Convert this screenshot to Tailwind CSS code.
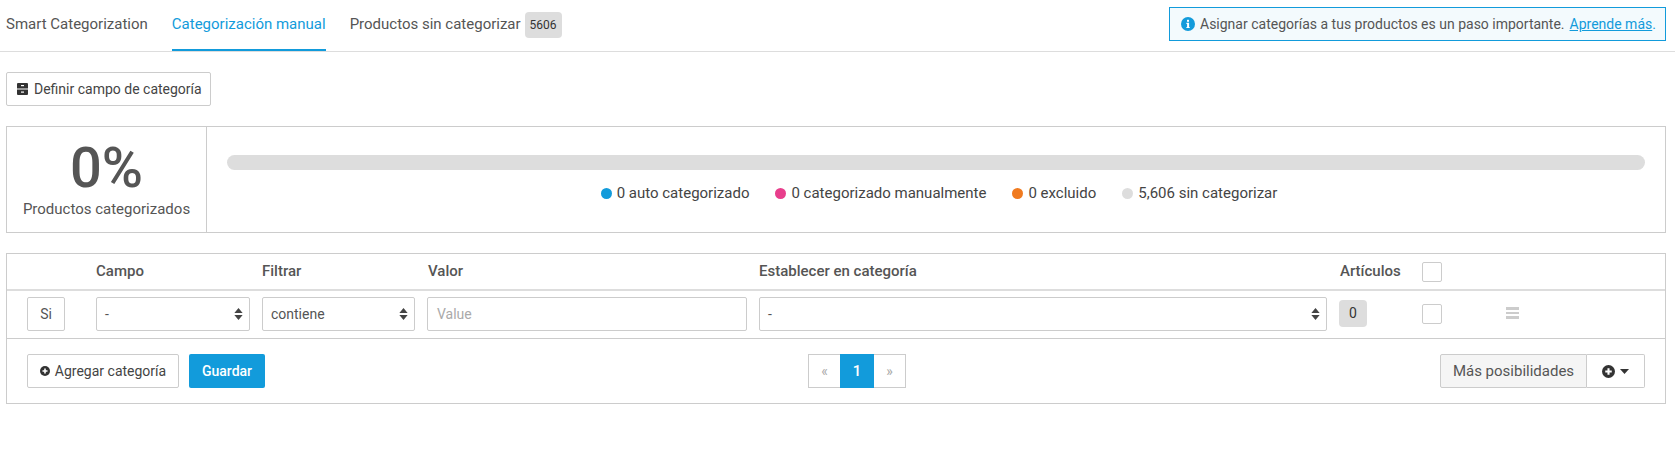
<!DOCTYPE html>
<html lang="es">
  <head>
    <meta charset="UTF-8" />
    <script src="https://cdn.jsdelivr.net/npm/@tailwindcss/browser@4"></script>
    <title>Categorización manual</title>
  </head>
  <body class="bg-white text-[#555] font-['Roboto',sans-serif] text-[15px]">
    <!-- tabs -->
    <div class="flex items-start h-[52px] border-b border-[#ddd] pl-[6px] pr-[9px]">
      <a class="h-[51px] flex items-center mr-[24px] border-b-2 border-transparent">Smart Categorization</a>
      <a class="h-[51px] flex items-center mr-[24px] border-b-2 border-[#129bdb] text-[#129bdb]">Categorización manual</a>
      <a class="h-[51px] flex items-center border-b-2 border-transparent">
        Productos sin categorizar
        <span class="ml-[4px] h-[26px] w-[37px] justify-center rounded-[4px] bg-[#ddd] text-[#333] text-[12px] flex items-center">5606</span>
      </a>
      <div class="ml-auto mt-[7px] h-[34px] w-[497px] border border-[#129bdb] bg-[#f3fafd] flex items-center pl-[11px] whitespace-nowrap text-[14px]">
        <svg class="w-[14px] h-[14px] mr-[5px] shrink-0" viewBox="0 0 14 14">
          <circle cx="7" cy="7" r="7" fill="#129bdb" />
          <rect x="6" y="2.8" width="2" height="2" fill="#fff" />
          <path d="M5.4 5.8h2.7v4.1h.6v1.2H5.4V9.9h.7V7h-.7z" fill="#fff" />
        </svg>
        <span>Asignar categorías a tus productos es un paso importante.</span>
        <a class="ml-[5px] text-[#129bdb] underline">Aprende más</a><span class="text-[#129bdb]">.</span>
      </div>
    </div>

    <div class="pl-[6px] pr-[9px]">
      <div class="pt-[20px]">
        <button class="h-[34px] w-[205px] border border-[#ccc] rounded-[2px] flex items-center pl-[10px] text-[#444] text-[14px]">
          <svg class="w-[11px] h-[12px] mr-[6px]" viewBox="0 0 11 12">
            <path d="M1 0h9a1 1 0 0 1 1 1v4.5H0V1a1 1 0 0 1 1-1zM0 6.5h11V11a1 1 0 0 1-1 1H1a1 1 0 0 1-1-1z" fill="#333" />
            <rect x="4" y="2" width="3" height="1.2" fill="#fff" />
            <rect x="4" y="8.5" width="3" height="1.2" fill="#fff" />
          </svg>
          Definir campo de categoría
        </button>
      </div>

      <!-- progress summary -->
      <div class="mt-[20px] h-[107px] border border-[#ccc] flex">
        <div class="w-[200px] shrink-0 border-r border-[#ccc] flex flex-col items-center">
          <div class="text-[56px] leading-[56px] mt-[13px] text-[#555] font-medium">0%</div>
          <div class="mt-[3px] leading-[20px]">Productos categorizados</div>
        </div>
        <div class="flex-1 px-[20px] pt-[28px]">
          <div class="h-[15px] rounded-full bg-[#ddd]"></div>
          <div class="mt-[12px] flex justify-center gap-[26px] text-[#444] leading-[22px] pl-[6px]">
            <span class="flex items-center gap-[5px]"><i class="w-[11px] h-[11px] rounded-full bg-[#129bdb]"></i>0 auto categorizado</span>
            <span class="flex items-center gap-[5px]"><i class="w-[11px] h-[11px] rounded-full bg-[#e83e8c]"></i>0 categorizado manualmente</span>
            <span class="flex items-center gap-[5px]"><i class="w-[11px] h-[11px] rounded-full bg-[#f07a1f]"></i>0 excluido</span>
            <span class="flex items-center gap-[5px]"><i class="w-[11px] h-[11px] rounded-full bg-[#ddd]"></i>5,606 sin categorizar</span>
          </div>
        </div>
      </div>

      <!-- rules table -->
      <div class="mt-[20px] h-[151px] border border-[#ccc]">
        <div class="h-[37px] border-b-2 border-[#ddd] flex items-center font-medium pl-[89px]">
          <div class="w-[166px]">Campo</div>
          <div class="w-[166px]">Filtrar</div>
          <div class="w-[331px]">Valor</div>
          <div class="w-[581px]">Establecer en categoría</div>
          <div class="w-[82px]">Artículos</div>
          <div class="w-[20px] h-[20px] border border-[#ccc] rounded-[2px]"></div>
        </div>
        <div class="h-[48px] border-b border-[#ccc] flex items-center pl-[20px] pb-px text-[14px]">
          <div class="w-[38px] h-[34px] border border-[#ccc] rounded-[2px] flex items-center justify-center mr-[31px]">Si</div>
          <div class="w-[154px] h-[34px] border border-[#ccc] rounded-[2px] flex items-center justify-between pl-[8px] pr-[6px] mr-[12px]">
            -
            <svg class="w-[9px] h-[12px]" viewBox="0 0 9 13"><path d="M4.5 0L9 5.5H0zM4.5 13L0 7.5h9z" fill="#444" /></svg>
          </div>
          <div class="w-[153px] h-[34px] border border-[#ccc] rounded-[2px] flex items-center justify-between pl-[8px] pr-[6px] mr-[12px]">
            contiene
            <svg class="w-[9px] h-[12px]" viewBox="0 0 9 13"><path d="M4.5 0L9 5.5H0zM4.5 13L0 7.5h9z" fill="#444" /></svg>
          </div>
          <div class="w-[320px] h-[34px] border border-[#ccc] rounded-[2px] flex items-center px-[9px] mr-[12px] text-[#aaa]">Value</div>
          <div class="w-[568px] h-[34px] border border-[#ccc] rounded-[2px] flex items-center justify-between pl-[8px] pr-[6px] mr-[12px]">
            -
            <svg class="w-[9px] h-[12px]" viewBox="0 0 9 13"><path d="M4.5 0L9 5.5H0zM4.5 13L0 7.5h9z" fill="#444" /></svg>
          </div>
          <div class="w-[83px]">
            <div class="w-[28px] h-[27px] -mt-[2px] rounded-[4px] bg-[#ddd] text-[#333] flex items-center justify-center">0</div>
          </div>
          <div class="w-[20px] h-[20px] border border-[#ccc] rounded-[2px] mr-[64px]"></div>
          <div class="w-[13px] flex flex-col gap-[2px] -mt-[2px]">
            <i class="h-[2.5px] bg-[#ccc]"></i><i class="h-[2.5px] bg-[#ccc]"></i><i class="h-[2.5px] bg-[#ccc]"></i>
          </div>
        </div>
        <div class="flex items-center h-[64px] pl-[20px] pr-[20px]">
          <button class="h-[34px] w-[152px] border border-[#ccc] rounded-[2px] flex items-center justify-center gap-[5px] text-[#444] text-[14px]">
            <svg class="w-[10px] h-[10px]" viewBox="0 0 10 10"><circle cx="5" cy="5" r="5" fill="#333" /><path d="M2.5 4.2h1.7V2.5h1.6v1.7h1.7v1.6H5.8v1.7H4.2V5.8H2.5z" fill="#fff" /></svg>
            Agregar categoría
          </button>
          <button class="ml-[10px] h-[34px] w-[76px] bg-[#129bdb] text-white font-medium rounded-[2px] text-[14px]">Guardar</button>
          <div class="flex h-[34px] ml-[543px] border border-[#ccc] text-[#aaa] text-[14px]">
            <span class="w-[31px] flex items-center justify-center">«</span>
            <span class="w-[34px] -my-px flex items-center justify-center bg-[#129bdb] text-white text-[15px] font-medium">1</span>
            <span class="w-[31px] flex items-center justify-center">»</span>
          </div>
          <div class="ml-auto flex h-[34px]">
            <span class="w-[147px] border border-[#ccc] bg-[#f5f5f5] flex items-center justify-center rounded-l-[2px]">Más posibilidades</span>
            <span class="w-[58px] border border-l-0 border-[#ccc] flex items-center justify-center gap-[5px] rounded-r-[2px]">
              <svg class="w-[13px] h-[13px]" viewBox="0 0 10 10"><circle cx="5" cy="5" r="5" fill="#333" /><path d="M2.5 4.2h1.7V2.5h1.6v1.7h1.7v1.6H5.8v1.7H4.2V5.8H2.5z" fill="#fff" /></svg>
              <svg class="w-[9px] h-[5px]" viewBox="0 0 9 5"><path d="M0 0h9L4.5 5z" fill="#333" /></svg>
            </span>
          </div>
        </div>
      </div>
    </div>
  </body>
</html>
